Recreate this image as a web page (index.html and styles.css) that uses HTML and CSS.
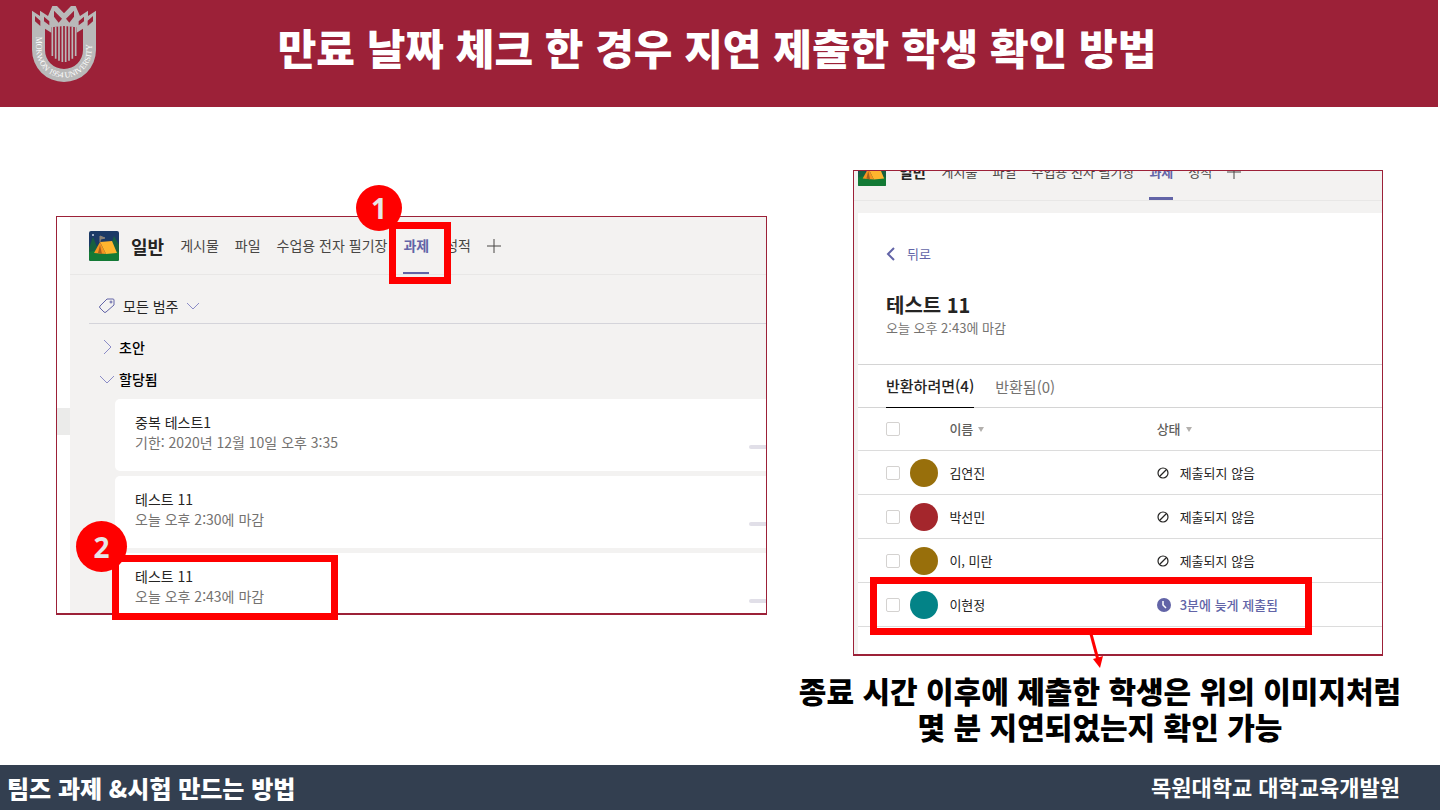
FILE: index.html
```html
<!DOCTYPE html>
<html lang="ko">
<head>
  <meta charset="UTF-8" />
  <meta name="viewport" content="width=device-width, initial-scale=1.0" />
  <title>팀즈 과제 &amp; 시험 만드는 방법</title>
  <link rel="stylesheet" href="styles.css">
</head>
<body>
  <!-- 공용 아이콘 -->
  <svg class="sprite" aria-hidden="true">
    <symbol id="tent" viewBox="0 0 30 30">
      <rect width="30" height="30" rx="2" fill="#1b3a66" />
      <path d="M0 17 L4 6 L8 16 L10 12 L14 17 L22 14 L25 5 L30 14 V28 Q30 30 28 30 H2 Q0 30 0 28 Z" fill="#17603f" />
      <path d="M0 21 Q15 16 30 21 V28 Q30 30 28 30 H2 Q0 30 0 28 Z" fill="#137a35" />
      <path d="M11 11 L23 10 L28 22 L17 23 Z" fill="#ffb52e" />
      <path d="M11 11 L17 23 L5 22 Z" fill="#f79421" />
      <path d="M11 14 L13 23 L9 22 Z" fill="#a8601c" />
      <path d="M11 11 V5 L16 7 L12 8" fill="#8d8478" stroke="#8d8478" stroke-width="1" />
      <circle cx="4" cy="4" r="1" fill="#c8d4e6" />
    </symbol>
    <symbol id="plus" viewBox="0 0 14 14">
      <path d="M7 0 V14 M0 7 H14" stroke="#484644" fill="none" />
    </symbol>
    <symbol id="none" viewBox="0 0 12 12">
      <circle cx="6" cy="6" r="5" fill="none" stroke="#252423" stroke-width="1.2" />
      <path d="M3 9 L9 3" stroke="#252423" stroke-width="1.2" />
    </symbol>
  </svg>

  <header class="slide-header">
    <svg class="logo" viewBox="0 0 216 252" role="img" aria-label="MOKWON 1954 UNIVERSITY">
      <path fill="#b9b9b9" fill-rule="evenodd" d="M12 26 L36 42 V26 L60 42 L73 12 H87 L108 34 L129 12 H143 L156 42 L180 26 V42 L204 26 V144 A96 96 0 0 1 12 144 Z
        M21 42 V58 L37 72 V56 Z M48 44 V58 L64 70 V58 Z M78 26 V44 L92 62 L102 50 Z M138 26 V44 L124 62 L114 50 Z
        M195 42 V58 L179 72 V56 Z M168 44 V58 L152 70 V58 Z
        M51 80 V144 A57 57 0 0 0 165 144 V80 L146 92 V76 L108 72 L70 76 V92 Z" />
      <path d="M73 74 V162 M83 74 V170 M93 72 V176 M103 70 V180 M113 70 V180 M123 72 V176 M133 74 V170 M143 74 V162" stroke="#b9b9b9" stroke-width="5" fill="none" />
      <path id="logoArc" d="M25 104 V144 A83 83 0 0 0 191 144 V100" fill="none" />
      <text class="logo-text"><textPath href="#logoArc">MOKWON 1954 UNIVERSITY</textPath></text>
    </svg>
    <h1>만료 날짜 체크 한 경우 지연 제출한 학생 확인 방법</h1>
  </header>

  <main class="slide-body">
    <!-- 왼쪽: 과제 목록 -->
    <section class="shot shot-list">
      <div class="window">
        <div class="rail"><span class="rail-item"></span></div>
        <div class="content">
          <nav class="tabs">
            <svg class="team-icon"><use href="#tent" /></svg>
            <strong class="channel">일반</strong>
            <a href="#">게시물</a>
            <a href="#">파일</a>
            <a href="#">수업용 전자 필기장</a>
            <a href="#" class="active">과제</a>
            <a href="#">성적</a>
            <button type="button" class="add" aria-label="탭 추가"><svg><use href="#plus" /></svg></button>
          </nav>

          <button type="button" class="filter">
            <svg class="tag" viewBox="0 0 16 16"><path d="M8 1 H14 Q15 1 15 2 V7 L7 14 Q6 15 5 14 L1 10 Q0 9 1 8 Z" /><circle cx="12" cy="4" r="1" /></svg>
            모든 범주
            <svg class="chevron" viewBox="0 0 14 8"><path d="M1 1 L7 7 L13 1" /></svg>
          </button>

          <div class="groups">
            <button type="button" class="group"><svg viewBox="0 0 14 14"><path d="M4 0 L11 7 L4 14" /></svg>초안</button>
            <button type="button" class="group"><svg viewBox="0 0 14 14"><path d="M0 4 L7 11 L14 4" /></svg>할당됨</button>
          </div>

          <ul class="cards">
            <li>
              <div><h3>중복 테스트1</h3><p>기한: 2020년 12월 10일 오후 3:35</p></div>
              <span class="bar"></span>
            </li>
            <li>
              <div><h3>테스트 11</h3><p>오늘 오후 2:30에 마감</p></div>
              <span class="bar"></span>
            </li>
            <li>
              <div><h3>테스트 11</h3><p>오늘 오후 2:43에 마감</p></div>
              <span class="bar"></span>
            </li>
          </ul>
        </div>
      </div>
      <span class="badge badge-1">1</span>
      <span class="mark mark-tab"></span>
      <span class="badge badge-2">2</span>
      <span class="mark mark-card"></span>
    </section>

    <!-- 오른쪽: 제출 현황 -->
    <div class="right">
      <section class="shot shot-detail">
        <div class="window">
          <div class="content">
            <nav class="tabs tabs-small">
              <svg class="team-icon"><use href="#tent" /></svg>
              <strong class="channel">일반</strong>
              <a href="#">게시물</a>
              <a href="#">파일</a>
              <a href="#">수업용 전자 필기장</a>
              <a href="#" class="active">과제</a>
              <a href="#">성적</a>
              <button type="button" class="add" aria-label="탭 추가"><svg><use href="#plus" /></svg></button>
            </nav>

            <div class="sheet">
              <div class="sheet-top">
                <a href="#" class="back"><svg viewBox="0 0 10 14"><path d="M8 1 L2 7 L8 13" /></svg>뒤로</a>
                <h2>테스트 11</h2>
                <p>오늘 오후 2:43에 마감</p>
              </div>
              <div class="subtabs">
                <button type="button" class="on">반환하려면(4)</button>
                <button type="button">반환됨(0)</button>
              </div>
              <table>
                <thead>
                  <tr>
                    <th class="col-check"><input type="checkbox" aria-label="모두 선택" /></th>
                    <th class="col-name">이름<span class="sort"></span></th>
                    <th class="col-state">상태<span class="sort"></span></th>
                  </tr>
                </thead>
                <tbody>
                  <tr>
                    <td><input type="checkbox" aria-label="김연진" /></td>
                    <td><div class="person"><span class="avatar gold"></span>김연진</div></td>
                    <td><div class="state"><svg><use href="#none" /></svg>제출되지 않음</div></td>
                  </tr>
                  <tr>
                    <td><input type="checkbox" aria-label="박선민" /></td>
                    <td><div class="person"><span class="avatar red"></span>박선민</div></td>
                    <td><div class="state"><svg><use href="#none" /></svg>제출되지 않음</div></td>
                  </tr>
                  <tr>
                    <td><input type="checkbox" aria-label="이, 미란" /></td>
                    <td><div class="person"><span class="avatar gold"></span>이, 미란</div></td>
                    <td><div class="state"><svg><use href="#none" /></svg>제출되지 않음</div></td>
                  </tr>
                  <tr>
                    <td><input type="checkbox" aria-label="이현정" /></td>
                    <td><div class="person"><span class="avatar teal"></span>이현정</div></td>
                    <td><div class="state late"><svg viewBox="0 0 14 14"><circle cx="7" cy="7" r="7" fill="#6264a7" /><path d="M6 3 V7 L9 10" stroke="#fff" stroke-width="1.5" fill="none" /></svg>3분에 늦게 제출됨</div></td>
                  </tr>
                </tbody>
              </table>
            </div>
          </div>
        </div>
        <span class="mark mark-row"></span>
        <svg class="arrow" viewBox="0 0 20 36"><path d="M5 0 L12 26" stroke="#f00" stroke-width="3" /><path d="M7 25 L17 22 L14 34 Z" fill="#f00" /></svg>
      </section>
      <p class="caption">종료 시간 이후에 제출한 학생은 위의 이미지처럼<br />몇 분 지연되었는지 확인 가능</p>
    </div>
  </main>

  <footer class="slide-footer">
    <span class="series">팀즈 과제 &amp;시험 만드는 방법</span>
    <span class="org">목원대학교 대학교육개발원</span>
  </footer>
</body>
</html>
```

FILE: styles.css
```css
* {
  box-sizing: border-box;
  margin: 0;
  padding: 0;
}

body {
  min-height: 100vh;
  display: flex;
  flex-direction: column;
  background: #fff;
  color: #252423;
  font-family: "Noto Sans CJK KR", "Noto Sans", sans-serif;
  font-size: 14px;
  line-height: 20px;
}

button {
  font: inherit;
  color: inherit;
  background: none;
  border: none;
  cursor: pointer;
}

a {
  color: inherit;
  text-decoration: none;
}

.sprite {
  display: none;
}

/* 상단 제목 */
.slide-header {
  display: flex;
  align-items: flex-start;
  height: 107px;
  margin-right: 2px;
  padding: 2px 28px;
  background: #9c2138;
  color: #fff;
}

.logo {
  width: 72px;
  height: 84px;
  flex: none;
}

.logo-text {
  font-family: "Liberation Serif", serif;
  font-size: 24px;
  fill: #fff;
}

.slide-header h1 {
  flex: 1;
  margin-right: 76px;
  padding-top: 15px;
  font-size: 42px;
  font-weight: 900;
  line-height: 60px;
  text-align: center;
}

/* 본문 */
.slide-body {
  flex: 1;
  display: grid;
  grid-template-columns: 711fr 530fr;
  gap: 86px;
  align-items: start;
  padding: 63px 57px 16px 56px;
}

.shot {
  position: relative;
}

.shot-list {
  margin-top: 46px;
}

.window {
  display: flex;
  overflow: hidden;
  border: 1px solid #9c2138;
  border-bottom-width: 2px;
  background: #f3f2f1;
}

.content {
  flex: 1;
  min-width: 0;
}

.rail {
  width: 13px;
  padding-top: 191px;
  background: #fff;
}

.rail-item {
  display: block;
  height: 27px;
  background: #ebebea;
}

/* 채널 탭 */
.tabs {
  display: flex;
  align-items: center;
  gap: 16px;
  height: 58px;
  padding-left: 19px;
  border-bottom: 1px solid #e8e7e6;
  color: #484644;
  white-space: nowrap;
}

.team-icon {
  width: 30px;
  height: 30px;
  margin-right: -4px;
}

.channel {
  font-size: 18px;
  color: #252423;
}

.tabs a {
  line-height: 57px;
}

.tabs .active {
  font-weight: 700;
  color: #6264a7;
  box-shadow: inset 0 -2px #6264a7;
}

.add {
  display: flex;
}

.add svg {
  width: 14px;
  height: 14px;
}

.tabs-small {
  gap: 15px;
  margin-top: -28px;
  padding-left: 4px;
  font-size: 13px;
}

.tabs-small .team-icon {
  width: 28px;
  height: 28px;
  margin-right: -2px;
}

.tabs-small .channel {
  font-size: 15px;
}

.tabs-small .active {
  box-shadow: inset 0 -3px #6264a7;
}

/* 과제 목록 */
.filter {
  display: flex;
  align-items: center;
  gap: 8px;
  width: calc(100% - 19px);
  height: 49px;
  margin-left: 19px;
  padding: 13px 0 0 10px;
  border-bottom: 1px solid #d4d4da;
}

.filter svg,
.group svg {
  fill: none;
  stroke: #8b8cc7;
}

.filter .tag {
  width: 16px;
  height: 16px;
  stroke: #6264a7;
}

.filter .chevron {
  width: 14px;
  height: 8px;
}

.groups {
  padding: 7px 0 4px 30px;
}

.group {
  display: flex;
  align-items: center;
  gap: 5px;
  height: 32px;
  font-weight: 500;
  color: #000;
}

.group svg {
  width: 14px;
  height: 14px;
}

.cards {
  display: grid;
  gap: 5px;
  padding-left: 45px;
  list-style: none;
}

.cards li {
  display: flex;
  justify-content: space-between;
  padding: 13px 0 19px 20px;
  background: #fff;
  border-radius: 5px 0 0 5px;
}

.cards li:last-child {
  padding-bottom: 7px;
  border-bottom-left-radius: 0;
}

.cards h3 {
  font-size: 14px;
  font-weight: 400;
}

.cards p {
  color: #747270;
}

.bar {
  width: 17px;
  height: 4px;
  margin-top: 33px;
  border-radius: 2px 0 0 2px;
  background: #e1dfe8;
}

/* 제출 현황 */
.sheet {
  margin: 12px 0 0 4px;
  padding-bottom: 27px;
  background: #fff;
  font-size: 13px;
}

.sheet-top {
  padding: 31px 28px 26px;
}

.back {
  display: flex;
  align-items: center;
  gap: 11px;
  color: #6264a7;
}

.back svg {
  width: 10px;
  height: 14px;
  fill: none;
  stroke: #6264a7;
  stroke-width: 2;
}

.sheet h2 {
  margin-top: 28px;
  font-size: 20px;
  line-height: 26px;
}

.sheet-top p {
  color: #747270;
}

.subtabs {
  display: flex;
  gap: 21px;
  padding-left: 28px;
  border-top: 1px solid #d4d4d4;
  border-bottom: 1px solid #d4d4d4;
}

.subtabs button {
  height: 43px;
  margin-bottom: -1px;
  font-size: 15px;
  color: #747270;
}

.subtabs .on {
  font-weight: 500;
  color: #252423;
  border-bottom: 1px solid #000;
}

table {
  width: 100%;
  border-collapse: separate;
  border-spacing: 0;
  table-layout: fixed;
}

th,
td {
  height: 44px;
  border-bottom: 1px solid #dcdcdc;
  text-align: left;
  font-weight: 400;
  vertical-align: middle;
}

th {
  height: 43px;
  font-weight: 500;
  color: #605e5c;
}

.col-check {
  width: 10%;
}

.col-name {
  width: 47%;
  padding-left: 39px;
}

input[type="checkbox"] {
  display: block;
  appearance: none;
  width: 14px;
  height: 14px;
  margin-left: 28px;
  border: 1px solid #d4d2d0;
  border-radius: 2px;
  background: #fff;
}

.sort {
  display: inline-block;
  margin: 0 0 2px 5px;
  border: 3px solid transparent;
  border-top: 5px solid #b3b0ad;
  border-bottom: none;
}

.person,
.state {
  display: flex;
  align-items: center;
  gap: 11px;
}

.avatar {
  width: 28px;
  height: 28px;
  border-radius: 50%;
}

.gold {
  background: #986f0b;
}

.red {
  background: #a4262c;
}

.teal {
  background: #038387;
}

.state svg {
  width: 12px;
  height: 12px;
}

.late {
  gap: 9px;
  font-weight: 500;
  color: #6264a7;
}

.late svg {
  width: 14px;
  height: 14px;
}

.caption {
  margin: 16px -42px 0 -78px;
  font-size: 30px;
  font-weight: 900;
  line-height: 36px;
  color: #000;
  text-align: center;
  white-space: nowrap;
}

/* 강조 표시 */
.mark {
  position: absolute;
  border: 7px solid #f00;
}

.mark-tab {
  left: 333px;
  top: 6px;
  width: 62px;
  height: 62px;
}

.mark-card {
  left: 56px;
  top: 339px;
  width: 226px;
  height: 65px;
}

.mark-row {
  left: 17px;
  top: 407px;
  width: 442px;
  height: 58px;
}

.badge {
  position: absolute;
  display: flex;
  align-items: center;
  justify-content: center;
  border-radius: 50%;
  background: #f00;
  color: #e6e6e6;
  font-family: "Noto Sans", sans-serif;
  font-size: 28px;
  font-weight: 700;
}

.badge-1 {
  left: 300px;
  top: -31px;
  width: 46px;
  height: 46px;
}

.badge-2 {
  left: 20px;
  top: 305px;
  width: 51px;
  height: 51px;
}

.arrow {
  position: absolute;
  left: 233px;
  top: 464px;
  width: 20px;
  height: 36px;
}

/* 하단 */
.slide-footer {
  display: flex;
  justify-content: space-between;
  align-items: center;
  height: 45px;
  padding: 0 40px 0 7px;
  background: #333f50;
  color: #fff;
}

.series {
  font-size: 24px;
  font-weight: 900;
}

.org {
  padding-bottom: 4px;
  font-size: 22px;
  font-weight: 700;
}
```
